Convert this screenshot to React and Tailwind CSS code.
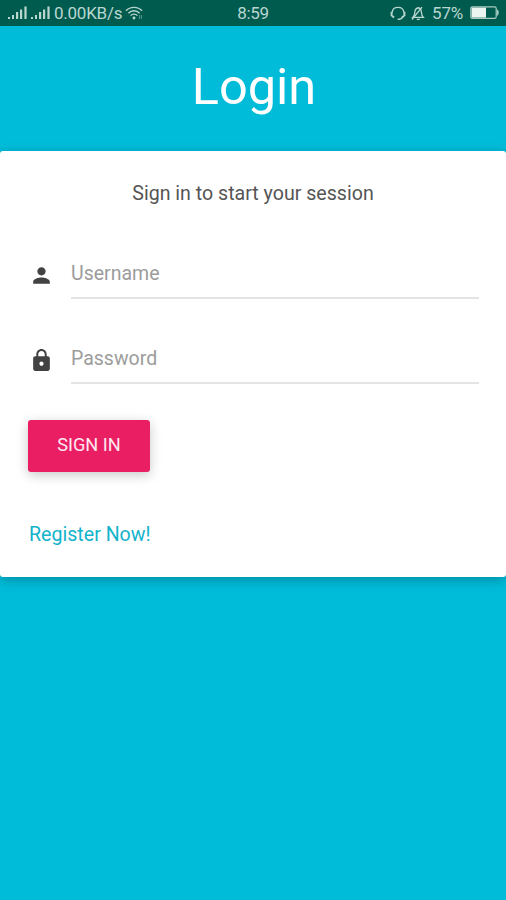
import React, { useState } from "react";
import { MdPerson, MdLock } from "react-icons/md";

const SignalBars = () => (
  <svg width="20" height="14" viewBox="0 0 20 14" fill="currentColor">
    <rect x="0" y="11" width="2" height="2" />
    <rect x="4" y="9" width="2" height="4" />
    <rect x="8" y="6" width="2.2" height="7" />
    <rect x="12" y="3.5" width="2.2" height="9.5" />
    <rect x="16.4" y="0.5" width="2.2" height="12.5" />
  </svg>
);

const WifiIcon = () => (
  <svg width="18" height="14" viewBox="0 0 18 14" fill="none" stroke="currentColor" strokeWidth="1.4">
    <path d="M1 4.8C5.2 0.2 12.8 0.2 17 4.8" />
    <path d="M3.4 7.2C6.4 4 11.6 4 14.6 7.2" />
    <path d="M5.6 9.6C7.4 7.6 10.6 7.6 12.4 9.6" />
    <circle cx="9" cy="12" r="1.4" fill="currentColor" stroke="none" />
    <path d="M14.6 9v4M16.4 9v4" strokeWidth="0.8" opacity="0.6" />
  </svg>
);

const HeadsetIcon = () => (
  <svg width="16" height="15" viewBox="0 0 16 15" fill="none" stroke="currentColor" strokeWidth="1.3">
    <path d="M2.2 6.4C2.4 3 4.6 1.4 8 1.4s5.6 1.6 5.8 5" />
    <path d="M1.6 5.8v3.6l2.4 2M14.4 5.8v3.6l-2.4 2" strokeWidth="2" />
    <path d="M12.4 11.2c-.8 1.8-2 2.2-4.8 2.2" />
  </svg>
);

const BellOffIcon = () => (
  <svg width="14" height="15" viewBox="0 0 14 15" fill="none" stroke="currentColor" strokeWidth="1.3">
    <path d="M1.8 11.4c1.7-1.5 1.9-3 2-5.2C4 3.4 5.2 2 7.4 2s2.8 1.4 3 4.2c.1 2.2.3 3.7 2 5.2z" />
    <path d="M5.8 13.3h3M1 13.5L11 1.2M7.4 2v-1" />
  </svg>
);

const BatteryIcon = () => (
  <svg width="30" height="14" viewBox="0 0 30 14" fill="none">
    <rect x="0.8" y="0.8" width="25.4" height="11.6" rx="1.6" stroke="#a9cbc2" strokeWidth="1.2" />
    <rect x="1.6" y="1.6" width="14.4" height="10" fill="#eaf4f1" />
    <path d="M26.8 3.4c2.6.2 2.6 6.2 0 6.4z" fill="#a9cbc2" />
  </svg>
);

const StatusBar = () => (
  <div className="grid h-[26px] grid-cols-3 items-center bg-[#005b4f] text-[17px] leading-none text-[#b9d6cf]">
    <div className="flex items-center pl-2 whitespace-nowrap">
      <SignalBars />
      <div className="ml-[3px]">
        <SignalBars />
      </div>
      <span className="ml-[3px] tracking-[-0.25px]">0.00KB/s</span>
      <div className="ml-[3px]">
        <WifiIcon />
      </div>
    </div>
    <span className="pt-px text-center tracking-[-0.3px]">8:59</span>
    <div className="flex items-center justify-end pr-1.5">
      <HeadsetIcon />
      <div className="ml-[5px]">
        <BellOffIcon />
      </div>
      <span className="ml-[7px] tracking-[-0.2px]">57%</span>
      <div className="ml-[7px]">
        <BatteryIcon />
      </div>
    </div>
  </div>
);

const Field = ({ icon: Icon, ...props }) => (
  <div className="flex h-[49px] items-center">
    <Icon className="mt-0.5 size-[25px] shrink-0 text-[#424242]" />
    <input
      {...props}
      className="ml-[17px] h-full min-w-0 flex-1 border-b-2 border-[#e4e4e4] bg-transparent text-[19.5px] placeholder:text-[#9c9c9c] focus:outline-none"
    />
  </div>
);

const App = () => {
  const [formData, setFormData] = useState({ username: "", password: "" });

  const handleChange = (e) => {
    const { name, value } = e.target;
    setFormData((prev) => ({ ...prev, [name]: value }));
  };

  return (
    <div className="min-h-screen bg-[#00bcd9] font-['Roboto',sans-serif]">
      <StatusBar />

      <h1 className="flex h-[125px] items-center justify-center pb-[3px] pl-0.5 text-[50.5px] leading-none text-white">
        Login
      </h1>

      <form
        onSubmit={(e) => e.preventDefault()}
        className="h-[426px] rounded-[3px] bg-white pt-[29px] pr-[27px] pl-[29px] shadow-[0_3px_12px_rgba(0,0,0,0.25)]"
      >
        <p className="pr-0.5 text-center text-[19.6px] leading-7 text-[#555]">Sign in to start your session</p>

        <div className="mt-[42px] flex flex-col gap-9">
          <Field
            icon={MdPerson}
            type="text"
            name="username"
            placeholder="Username"
            value={formData.username}
            onChange={handleChange}
          />
          <Field
            icon={MdLock}
            type="password"
            name="password"
            placeholder="Password"
            value={formData.password}
            onChange={handleChange}
          />
        </div>

        <button
          type="submit"
          className="mt-9 -ml-px flex h-[52px] w-[122px] items-center justify-center rounded-[3px] bg-[#e91e63] pb-[3px] text-[18.2px] text-white/90 shadow-[0_3px_12px_rgba(0,0,0,0.22)]"
        >
          SIGN IN
        </button>

        <a href="#register" className="mt-[49px] inline-block text-[19.6px] leading-7 text-[#12b3cb]">
          Register Now!
        </a>
      </form>
    </div>
  );
};

export default App;
